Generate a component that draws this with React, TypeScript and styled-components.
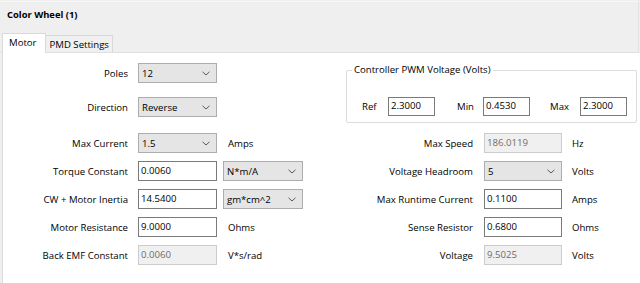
import React from "react";
import styled, { createGlobalStyle } from "styled-components";

const GlobalStyle = createGlobalStyle`
  html, body { margin: 0; padding: 0; background: #efefef; }
  body { font-family: "Open Sans", "Noto Sans", "Liberation Sans", sans-serif; font-size: 9.6px; color: #000; }
`;

const Window = styled.div`
  width: 640px;
  height: 283px;
  background: #efefef;
  box-sizing: border-box;
  border-top: 1px solid #efefef;
  display: flex;
  flex-direction: column;
  overflow: hidden;
`;

const TopLine = styled.div`
  height: 1px;
  background: #f7f7f7;
  margin-right: 2px;
`;

const Header = styled.div`
  height: 25px;
  padding-left: 7px;
  display: flex;
  align-items: center;
  font-weight: 700;
  font-size: 9.4px;
  border-right: 1px solid #e2e2e2;
  margin-right: 1px;
`;

const TabStrip = styled.div`
  height: 26px;
  display: flex;
  align-items: flex-end;
  padding-left: 2px;
  border-bottom: 1px solid #e1e1e1;
  border-right: 1px solid #e2e2e2;
  margin-right: 1px;
  box-sizing: border-box;
`;

const Tab = styled.div<{ $active?: boolean }>`
  box-sizing: border-box;
  height: ${(p) => (p.$active ? "20px" : "17px")};
  margin-bottom: ${(p) => (p.$active ? "-1px" : "0")};
  padding: ${(p) => (p.$active ? "0 8px 2px 6px" : "0 3px 0 4px")};
  background: ${(p) => (p.$active ? "#ffffff" : "#f0f0f0")};
  border: 1px solid #d9d9d9;
  border-bottom: none;
  border-left: ${(p) => (p.$active ? "1px solid #d9d9d9" : "none")};
  display: flex;
  align-items: center;
  white-space: nowrap;
`;

const Panel = styled.div`
  flex: 1;
  margin-left: 2px;
  background: #ffffff;
  border-left: 1px solid #dcdcdc;
  padding-top: 10px;
  box-sizing: border-box;
`;

const TopSection = styled.div`
  display: flex;
  align-items: flex-start;
  height: 60px;
`;

const LeftTop = styled.div`
  width: 340px;
  display: flex;
  flex-direction: column;
  gap: 14px;
`;

const Row = styled.div`
  display: flex;
  align-items: center;
  height: 20px;
`;

const Label = styled.div<{ $w: number; $gap: number }>`
  width: ${(p) => p.$w}px;
  margin-right: ${(p) => p.$gap}px;
  text-align: right;
  white-space: nowrap;
`;

const Unit = styled.div<{ $gap: number }>`
  margin-left: ${(p) => p.$gap}px;
  white-space: nowrap;
`;

const ComboBox = styled.div<{ $w: number; $h?: number }>`
  box-sizing: border-box;
  width: ${(p) => p.$w}px;
  height: ${(p) => p.$h ?? 20}px;
  background: #e5e5e5;
  border: 1px solid #adadad;
  display: flex;
  align-items: center;
  justify-content: space-between;
  padding: 0 6px 0 3px;
`;

const TextBox = styled.div<{ $w: number; $h?: number; $disabled?: boolean }>`
  box-sizing: border-box;
  width: ${(p) => p.$w}px;
  height: ${(p) => p.$h ?? 20}px;
  background: ${(p) => (p.$disabled ? "#f0f0f0" : "#ffffff")};
  border: 1px solid ${(p) => (p.$disabled ? "#cccccc" : "#7a7a7a")};
  color: ${(p) => (p.$disabled ? "#6d6d6d" : "#000")};
  display: flex;
  align-items: center;
  padding: 0 0 2px 2px;
`;

const GroupBox = styled.div`
  position: relative;
  box-sizing: border-box;
  margin-left: 3px;
  margin-top: 7px;
  width: 291px;
  height: 53px;
  border: 1px solid #dcdcdc;
  border-radius: 2px;
  padding: 20px 0 0 15px;
  display: flex;
  align-items: center;
  align-self: flex-start;
`;

const Legend = styled.div`
  position: absolute;
  top: -8px;
  left: 5px;
  padding: 0 2px;
  background: #ffffff;
  line-height: 14px;
  white-space: nowrap;
`;

const GroupRow = styled.div`
  display: flex;
  align-items: center;
  height: 19px;
`;

const GroupLabel = styled.div<{ $w: number; $lead: number }>`
  width: ${(p) => p.$w}px;
  margin-left: ${(p) => p.$lead}px;
  white-space: nowrap;
`;

const BottomGrid = styled.div`
  display: grid;
  grid-template-columns: 340px 1fr;
  grid-auto-rows: 20px;
  row-gap: 8px;
  margin-top: 10px;
`;

const Chevron = () => (
  <svg width="8" height="5" viewBox="0 0 8 5">
    <path d="M0.5 0.8 L4 4 L7.5 0.8" fill="none" stroke="#5a5a5a" strokeWidth="1" />
  </svg>
);

const Combo = ({ value, w, h }: { value: string; w: number; h?: number }) => (
  <ComboBox $w={w} $h={h}>
    <span>{value}</span>
    <Chevron />
  </ComboBox>
);

const L = { w: 125, gap: 10 };
const R = { w: 130, gap: 11 };

export default function App() {
  return (
    <>
      <GlobalStyle />
      <Window>
        <TopLine />
        <Header>Color Wheel (1)</Header>
        <TabStrip>
          <Tab $active>Motor</Tab>
          <Tab>PMD Settings</Tab>
        </TabStrip>
        <Panel>
          <TopSection>
            <LeftTop>
              <Row>
                <Label $w={L.w} $gap={L.gap}>Poles</Label>
                <Combo value="12" w={79} />
              </Row>
              <Row>
                <Label $w={L.w} $gap={L.gap}>Direction</Label>
                <Combo value="Reverse" w={79} />
              </Row>
            </LeftTop>
            <GroupBox>
              <Legend>Controller PWM Voltage (Volts)</Legend>
              <GroupRow>
                <GroupLabel $w={26} $lead={0}>Ref</GroupLabel>
                <TextBox $w={47} $h={19}>2.3000</TextBox>
                <GroupLabel $w={26} $lead={22}>Min</GroupLabel>
                <TextBox $w={47} $h={19}>0.4530</TextBox>
                <GroupLabel $w={30} $lead={20}>Max</GroupLabel>
                <TextBox $w={47} $h={19}>2.3000</TextBox>
              </GroupRow>
            </GroupBox>
          </TopSection>
          <BottomGrid>
            <Row>
              <Label $w={L.w} $gap={L.gap}>Max Current</Label>
              <Combo value="1.5" w={79} />
              <Unit $gap={11}>Amps</Unit>
            </Row>
            <Row>
              <Label $w={R.w} $gap={R.gap}>Max Speed</Label>
              <TextBox $w={78} $disabled>186.0119</TextBox>
              <Unit $gap={10}>Hz</Unit>
            </Row>
            <Row>
              <Label $w={L.w} $gap={L.gap}>Torque Constant</Label>
              <TextBox $w={79}>0.0060</TextBox>
              <Unit $gap={6}>
                <Combo value="N*m/A" w={80} />
              </Unit>
            </Row>
            <Row>
              <Label $w={R.w} $gap={R.gap}>Voltage Headroom</Label>
              <Combo value="5" w={78} />
              <Unit $gap={10}>Volts</Unit>
            </Row>
            <Row>
              <Label $w={L.w} $gap={L.gap}>CW + Motor Inertia</Label>
              <TextBox $w={79}>14.5400</TextBox>
              <Unit $gap={6}>
                <Combo value="gm*cm^2" w={80} />
              </Unit>
            </Row>
            <Row>
              <Label $w={R.w} $gap={R.gap}>Max Runtime Current</Label>
              <TextBox $w={78}>0.1100</TextBox>
              <Unit $gap={10}>Amps</Unit>
            </Row>
            <Row>
              <Label $w={L.w} $gap={L.gap}>Motor Resistance</Label>
              <TextBox $w={79}>9.0000</TextBox>
              <Unit $gap={11}>Ohms</Unit>
            </Row>
            <Row>
              <Label $w={R.w} $gap={R.gap}>Sense Resistor</Label>
              <TextBox $w={78}>0.6800</TextBox>
              <Unit $gap={10}>Ohms</Unit>
            </Row>
            <Row>
              <Label $w={L.w} $gap={L.gap}>Back EMF Constant</Label>
              <TextBox $w={79} $disabled>0.0060</TextBox>
              <Unit $gap={11}>V*s/rad</Unit>
            </Row>
            <Row>
              <Label $w={R.w} $gap={R.gap}>Voltage</Label>
              <TextBox $w={78} $disabled>9.5025</TextBox>
              <Unit $gap={10}>Volts</Unit>
            </Row>
          </BottomGrid>
        </Panel>
      </Window>
    </>
  );
}
